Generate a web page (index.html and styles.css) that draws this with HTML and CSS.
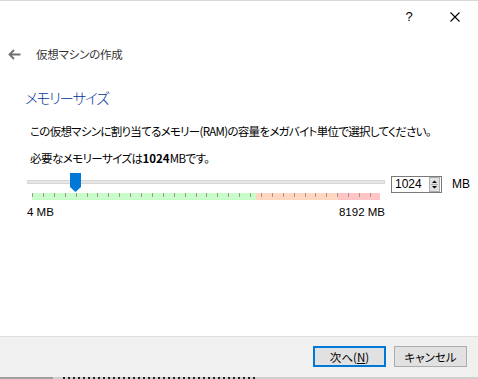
FILE: index.html
```html
<!DOCTYPE html>
<html lang="ja">
<head>
<meta charset="utf-8">
<title>仮想マシンの作成</title>
<link rel="stylesheet" href="styles.css">
</head>
<body>
<div class="window">
  <div class="titlebar">
    <span class="tb-btn help">?</span>
    <span class="tb-btn close">
      <svg width="10" height="10" viewBox="0 0 10 10"><path d="M0.5 0.5 L9.5 9.5 M9.5 0.5 L0.5 9.5" stroke="#000" stroke-width="1.1" fill="none"/></svg>
    </span>
  </div>
  <div class="header">
    <svg class="back" width="13" height="11" viewBox="0 0 13 11"><path d="M1.5 5.5 H12.5 M6 1 L1.5 5.5 L6 10" stroke="#707070" stroke-width="1.8" fill="none"/></svg>
    <span class="header-title">仮想マシンの作成</span>
  </div>
  <div class="content">
    <h1 class="page-title">メモリーサイズ</h1>
    <p class="desc">この仮想マシンに割り当てるメモリー(RAM)の容量をメガバイト単位で選択してください。</p>
    <p class="desc second">必要なメモリーサイズは<b>1024</b>MBです。</p>
    <div class="slider-row">
      <div class="slider">
        <div class="track"></div>
        <div class="thumb">
          <svg width="11" height="19" viewBox="0 0 11 19"><path d="M0 0 H11 V14 L5.5 19 L0 14 Z" fill="#0078d7"/></svg>
        </div>
        <div class="band"></div>
      </div>
      <div class="spin">
        <span class="spin-value">1024</span>
        <span class="spin-btns">
          <svg width="11" height="15" viewBox="0 0 11 15"><rect x="0.5" y="0.5" width="10" height="14" fill="#e1e1e1" stroke="#adadad"/><path d="M3 6 H8 L5.5 3.5 Z M3 9 H8 L5.5 11.5 Z" fill="#000"/><path d="M2 7.5 H9" stroke="#adadad"/></svg>
        </span>
      </div>
      <span class="unit">MB</span>
    </div>
    <div class="scale">
      <span>4 MB</span>
      <span>8192 MB</span>
    </div>
  </div>
  <div class="spacer"></div>
  <div class="footer">
    <button class="btn default">次へ(<u>N</u>)</button>
    <button class="btn">キャンセル</button>
  </div>
  <div class="taskstrip"></div>
</div>
</body>
</html>
```
FILE: styles.css
```css
html, body {
  margin: 0;
  padding: 0;
  background: #ffffff;
}
body {
  width: 478px;
  height: 379px;
  overflow: hidden;
  font-family: "Noto Sans CJK JP", "Noto Sans", sans-serif;
  font-feature-settings: "palt";
  color: #000;
}
.window {
  height: 379px;
  display: flex;
  flex-direction: column;
  border-top: 1px solid #d9d9d9;
  box-sizing: border-box;
}
.titlebar {
  height: 31px;
  display: flex;
  justify-content: flex-end;
  align-items: center;
}
.tb-btn {
  width: 46px;
  height: 31px;
  display: flex;
  align-items: center;
  justify-content: center;
  font-size: 13px;
  font-family: "Liberation Sans", sans-serif;
}
.header {
  height: 44px;
  display: flex;
  align-items: center;
  padding-left: 8px;
}
.back { margin-right: 15px; }
.header-title {
  font-size: 11.5px;
  color: #333;
  letter-spacing: -0.2px;
}
.content {
  padding-left: 25px;
}
.page-title {
  margin: 11px 0 0 0;
  font-size: 14.5px;
  font-weight: 300;
  line-height: 22px;
  color: #003399;
  letter-spacing: -1.2px;
}
.desc {
  margin: 14px 0 0 5px;
  font-size: 11.5px;
  line-height: 16px;
  letter-spacing: -0.7px;
}
.desc.second { margin-top: 11px; letter-spacing: -0.55px; }
.desc b { font-weight: bold; letter-spacing: 0; }
.slider-row {
  margin-top: 6px;
  display: flex;
  align-items: flex-start;
  margin-left: 2px;
}
.slider {
  position: relative;
  width: 358px;
  height: 29px;
}
.track {
  margin-top: 8px;
  height: 4px;
  box-sizing: border-box;
  border: 1px solid #d6d6d6;
  background: #e7e7e7;
}
.thumb {
  position: absolute;
  left: 43px;
  top: 1px;
  width: 11px;
  height: 19px;
}
.thumb svg { display: block; }
.band {
  margin: 9px 0 0 5px;
  width: 348px;
  height: 7px;
  background:
    repeating-linear-gradient(to right, #a0978c 0 1px, transparent 1px 10.9px) 0 0 / 100% 4px no-repeat,
    linear-gradient(to right, #c8fcc8 0 64.4%, #ffd6c0 64.4% 87.9%, #ffc4c4 87.9% 100%);
}
.spin {
  margin: 4px 0 0 6px;
  width: 51px;
  height: 17px;
  box-sizing: border-box;
  border: 1px solid #7a7a7a;
  display: flex;
  align-items: center;
  justify-content: space-between;
  background: #fff;
}
.spin-value {
  padding-left: 3px;
  font-size: 12px;
  line-height: 15px;
  font-family: "Liberation Sans", sans-serif;
}
.spin-btns { display: flex; margin-right: 1px; }
.spin-btns svg { display: block; }
.unit {
  margin: 5px 0 0 10px;
  font-size: 12px;
  line-height: 15px;
  font-family: "Liberation Sans", sans-serif;
}
.scale {
  width: 358px;
  margin: 3px 0 0 2px;
  display: flex;
  justify-content: space-between;
  font-family: "Liberation Sans", sans-serif;
  font-size: 11.5px;
  line-height: 16px;
}
.spacer { flex: 1; }
.footer {
  height: 41px;
  box-sizing: border-box;
  background: #f0f0f0;
  border-top: 1px solid #dfdfdf;
  display: flex;
  justify-content: flex-end;
  align-items: flex-start;
  padding: 9px 11px 0 0;
  gap: 8px;
}
.btn {
  width: 73px;
  height: 21px;
  box-sizing: border-box;
  border: 1px solid #adadad;
  background: #e1e1e1;
  font-family: "Noto Sans CJK JP", sans-serif;
  font-feature-settings: "palt";
  font-size: 11.5px;
  padding: 0;
  color: #000;
}
.btn.default {
  border: 2px solid #0078d7;
}
.taskstrip {
  height: 2px;
  background:
    repeating-linear-gradient(to right, #222 0 2px, transparent 2px 5px) 63px 0 / 194px 2px no-repeat,
    linear-gradient(to right, #a0a0a0 0 53px, #cfcfcf 53px 100%);
}
```
